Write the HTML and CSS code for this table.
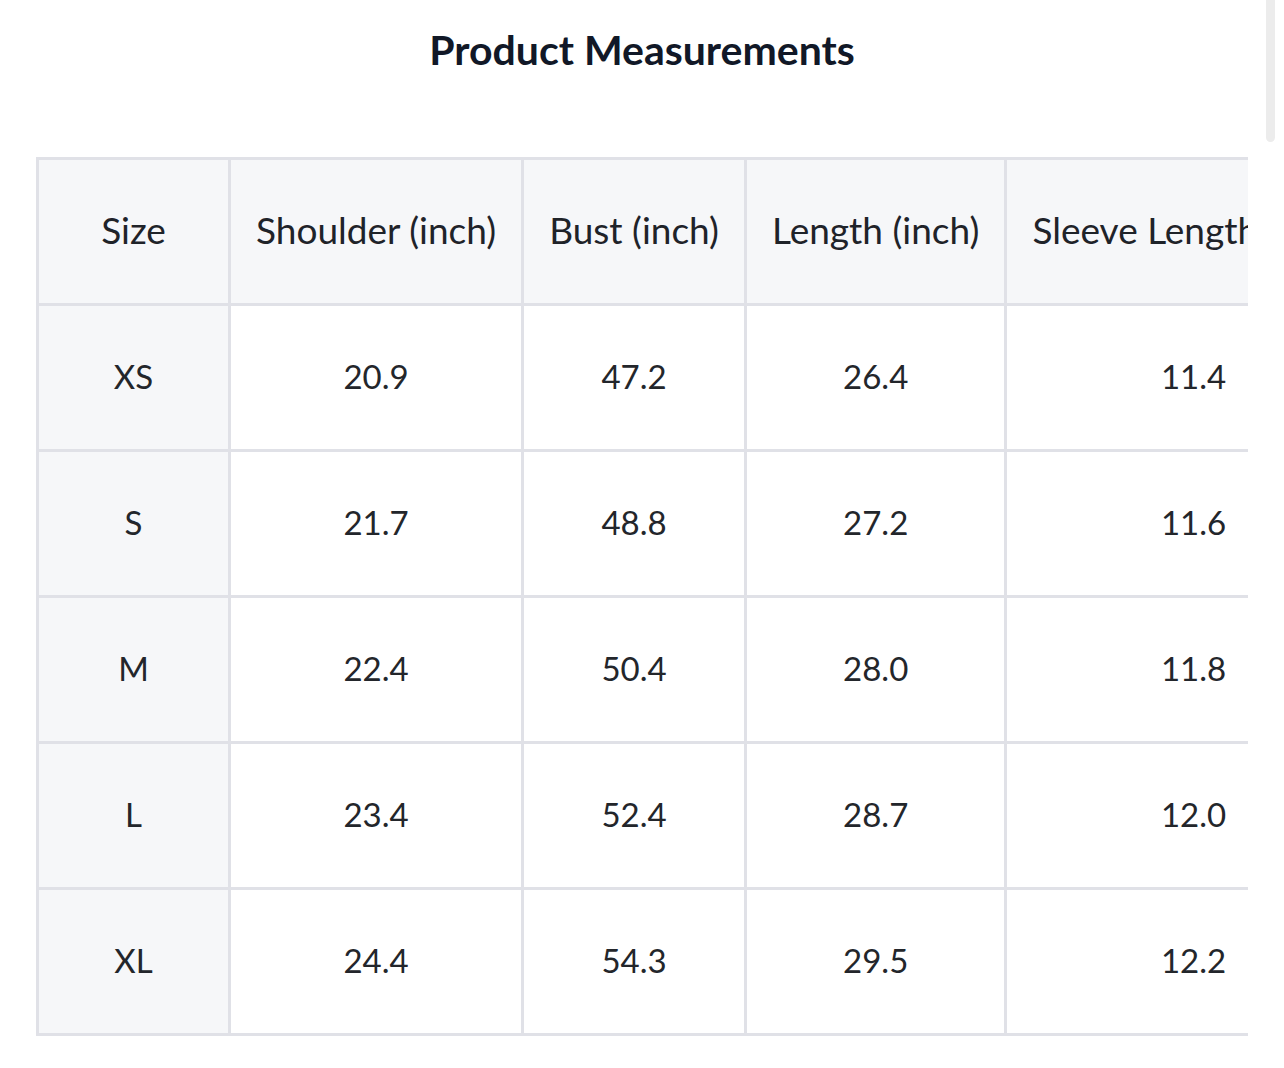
FILE: index.html
```html
<!DOCTYPE html>
<html lang="en">
<head>
<meta charset="utf-8">
<title>Product Measurements</title>
<link rel="stylesheet" href="styles.css">
</head>
<body>
<main class="page">
  <h1 class="title">Product Measurements</h1>
  <div class="table-wrap">
    <table class="sizes">
      <thead>
        <tr>
          <th class="col-size">Size</th>
          <th>Shoulder (inch)</th>
          <th>Bust (inch)</th>
          <th>Length (inch)</th>
          <th>Sleeve Length (inch)</th>
        </tr>
      </thead>
      <tbody>
        <tr><th>XS</th><td>20.9</td><td>47.2</td><td>26.4</td><td>11.4</td></tr>
        <tr><th>S</th><td>21.7</td><td>48.8</td><td>27.2</td><td>11.6</td></tr>
        <tr><th>M</th><td>22.4</td><td>50.4</td><td>28.0</td><td>11.8</td></tr>
        <tr><th>L</th><td>23.4</td><td>52.4</td><td>28.7</td><td>12.0</td></tr>
        <tr><th>XL</th><td>24.4</td><td>54.3</td><td>29.5</td><td>12.2</td></tr>
      </tbody>
    </table>
  </div>
</main>
<div class="scroll-thumb"></div>
</body>
</html>
```
FILE: styles.css
```css
html, body {
  margin: 0;
  padding: 0;
  background: #ffffff;
}
body {
  font-family: Lato, "Noto Sans", sans-serif;
  color: #1f2329;
}
.page {
  padding: 0 36px;
}
.title {
  margin: 0;
  padding-top: 24px;
  height: 157px;
  box-sizing: border-box;
  text-align: center;
  font-size: 41px;
  line-height: 52px;
  font-weight: 700;
  color: #111827;
}
.table-wrap {
  overflow: hidden;
  width: 100%;
}
.sizes {
  border-collapse: collapse;
  white-space: nowrap;
}
.sizes th,
.sizes td {
  border: 3px solid #e0e1e7;
  height: 139px;
  padding: 0 25px 4px;
  text-align: center;
  vertical-align: middle;
  font-size: 37px;
  font-weight: 400;
  color: #1f2329;
}
.sizes tbody th,
.sizes tbody td {
  height: 140px;
  font-size: 33px;
  padding-bottom: 3px;
  color: #23262b;
}
.sizes thead th,
.sizes tbody th {
  background: #f6f7f9;
}
.sizes .col-size {
  min-width: 139px;
}
.scroll-thumb {
  position: fixed;
  top: 0;
  right: 9px;
  width: 9px;
  height: 142px;
  background: #ececec;
  border-radius: 0 0 5px 5px;
}
```
